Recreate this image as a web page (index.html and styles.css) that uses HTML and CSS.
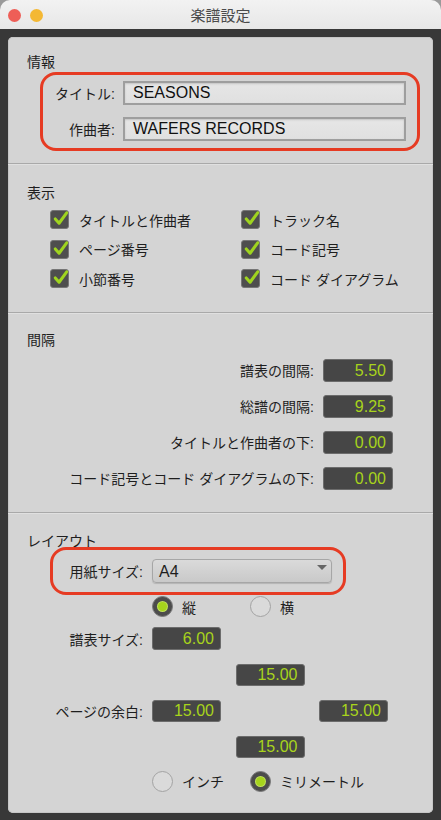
FILE: index.html
```html
<!DOCTYPE html>
<html lang="ja">
  <head>
    <meta charset="UTF-8" />
    <meta name="viewport" content="width=device-width, initial-scale=1.0" />
    <title>楽譜設定</title>
    <link rel="stylesheet" href="styles.css">
  </head>
  <body>
    <div class="window">
      <div class="titlebar">
        <div class="lights">
          <span class="light close"></span>
          <span class="light minimize"></span>
        </div>
        <div class="title">楽譜設定</div>
      </div>

      <div class="frame">
        <div class="panel">
          <!-- 情報 -->
          <section class="group info">
            <h2>情報</h2>
            <div class="callout info-box">
              <div class="field">
                <label>タイトル:</label>
                <div class="text-input">SEASONS</div>
              </div>
              <div class="field">
                <label>作曲者:</label>
                <div class="text-input">WAFERS RECORDS</div>
              </div>
            </div>
          </section>

          <!-- 表示 -->
          <section class="group display">
            <h2>表示</h2>
            <div class="checklist">
              <div class="check"><span class="checkbox"><svg viewBox="0 0 20 20"><path d="M4.5 10.5l4 4.5 8-11" /></svg></span>タイトルと作曲者</div>
              <div class="check"><span class="checkbox"><svg viewBox="0 0 20 20"><path d="M4.5 10.5l4 4.5 8-11" /></svg></span>トラック名</div>
              <div class="check"><span class="checkbox"><svg viewBox="0 0 20 20"><path d="M4.5 10.5l4 4.5 8-11" /></svg></span>ページ番号</div>
              <div class="check"><span class="checkbox"><svg viewBox="0 0 20 20"><path d="M4.5 10.5l4 4.5 8-11" /></svg></span>コード記号</div>
              <div class="check"><span class="checkbox"><svg viewBox="0 0 20 20"><path d="M4.5 10.5l4 4.5 8-11" /></svg></span>小節番号</div>
              <div class="check"><span class="checkbox"><svg viewBox="0 0 20 20"><path d="M4.5 10.5l4 4.5 8-11" /></svg></span>コード ダイアグラム</div>
            </div>
          </section>

          <!-- 間隔 -->
          <section class="group spacing">
            <h2>間隔</h2>
            <div class="spacing-row">
              <label>譜表の間隔:</label>
              <div class="num">5.50</div>
            </div>
            <div class="spacing-row">
              <label>総譜の間隔:</label>
              <div class="num">9.25</div>
            </div>
            <div class="spacing-row">
              <label>タイトルと作曲者の下:</label>
              <div class="num">0.00</div>
            </div>
            <div class="spacing-row">
              <label>コード記号とコード ダイアグラムの下:</label>
              <div class="num">0.00</div>
            </div>
          </section>

          <!-- レイアウト -->
          <section class="group layout">
            <h2>レイアウト</h2>
            <div class="callout paper-box">
              <label>用紙サイズ:</label>
              <div class="select">A4<span class="arrow"></span></div>
            </div>

            <div class="radios orientation">
              <div class="radio-item"><span class="radio on"></span>縦</div>
              <div class="radio-item"><span class="radio"></span>横</div>
            </div>

            <div class="layout-row staff">
              <label>譜表サイズ:</label>
              <div class="num">6.00</div>
            </div>

            <div class="layout-row margins">
              <label>ページの余白:</label>
              <div class="margin-grid">
                <div class="num top">15.00</div>
                <div class="num left">15.00</div>
                <div class="num right">15.00</div>
                <div class="num bottom">15.00</div>
              </div>
            </div>

            <div class="radios units">
              <div class="radio-item"><span class="radio"></span>インチ</div>
              <div class="radio-item"><span class="radio on"></span>ミリメートル</div>
            </div>
          </section>
        </div>
      </div>
    </div>
  </body>
</html>
```

FILE: styles.css
```css
body {
  margin: 0;
  background: #9a9a9a;
  font-family: "Liberation Sans", "Noto Sans CJK JP", sans-serif;
  font-size: 14px;
  color: #1e1e1e;
}

.window {
  min-height: 100vh;
  display: flex;
  flex-direction: column;
}

.titlebar {
  height: 29px;
  background: linear-gradient(#f2f2f2, #e7e7e7);
  border-radius: 10px 10px 0 0;
  display: grid;
  grid-template-columns: 1fr auto 1fr;
  align-items: center;
  padding: 0 8px;
}

.lights {
  display: flex;
  gap: 9px;
  padding-top: 1px;
}

.light {
  width: 13px;
  height: 13px;
  border-radius: 50%;
}

.close {
  background: #ee5e57;
}

.minimize {
  background: #f4b834;
}

.title {
  font-size: 15px;
  color: #4a4a4a;
}

.frame {
  flex: 1;
  display: flex;
  background: #383838;
  padding: 8px 8px 7px;
}

.panel {
  flex: 1;
  background: #d4d4d4;
  border-radius: 5px;
  box-shadow: inset 0 0 0 1px #c6c6c6;
}

.group + .group {
  border-top: 1px solid #a9a9a9;
  box-shadow: inset 0 1px 0 #e0e0e0;
}

h2 {
  margin: 0 0 0 19px;
  font-size: 14px;
  font-weight: normal;
  line-height: 20px;
}

label {
  white-space: nowrap;
}

.callout {
  border: 3px solid #e63b23;
  border-radius: 16px;
}

/* 情報 */
.info {
  padding: 15px 0 12px;
}

.info-box {
  margin-left: 32px;
  width: 363px;
  padding: 6px 11px 7px 0;
  display: flex;
  flex-direction: column;
  gap: 12px;
}

.field {
  display: flex;
  align-items: center;
  gap: 8px;
}

.field label {
  width: 72px;
  text-align: right;
}

.text-input {
  flex: 1;
  height: 24px;
  box-sizing: border-box;
  border: 2px solid #9e9e9e;
  background: linear-gradient(#e6e6e6, #e0e0e0);
  box-shadow: inset 0 1px 2px rgba(0, 0, 0, 0.15);
  font-size: 16px;
  line-height: 20px;
  padding-left: 8px;
  color: #111;
}

/* 表示 */
.display {
  padding: 19px 0 18px;
}

.checklist {
  margin: 2px 0 0 42px;
  display: grid;
  grid-template-columns: 191px 1fr;
  grid-auto-rows: 29.5px;
}

.check {
  display: flex;
  align-items: center;
  gap: 10px;
}

.checkbox {
  width: 19px;
  height: 19px;
  box-sizing: border-box;
  border: 1px solid #767676;
  border-radius: 3px;
  background: #4e4e4e;
  display: flex;
  position: relative;
}

.checkbox svg {
  position: absolute;
  left: 0;
  top: -2px;
  width: 19px;
  height: 19px;
  fill: none;
  stroke: #9fd41f;
  stroke-width: 3.2;
  stroke-linecap: round;
  stroke-linejoin: round;
}

/* 間隔 */
.spacing {
  padding: 17px 0 16px;
}

.spacing h2 {
  margin-bottom: 2.5px;
}

.spacing-row {
  height: 36px;
  display: flex;
  justify-content: flex-end;
  align-items: center;
  gap: 9px;
  padding-right: 40px;
}

.num {
  width: 70px;
  height: 23px;
  box-sizing: border-box;
  background: #464646;
  border: 1px solid #6c6c6c;
  border-radius: 3px;
  color: #a8d41c;
  font-size: 16px;
  line-height: 21px;
  text-align: right;
  padding-right: 6px;
}

/* レイアウト */
.layout {
  padding-top: 18px;
}

.paper-box {
  margin: -4px 0 0 42px;
  width: fit-content;
  padding: 9px 11px 9px 0;
  display: flex;
  align-items: center;
  gap: 9px;
}

.paper-box label {
  width: 90px;
  text-align: right;
}

.select {
  width: 180px;
  height: 24px;
  box-sizing: border-box;
  border: 1px solid #a6a6a6;
  border-radius: 4px;
  background: linear-gradient(#dadada, #c9c9c9);
  box-shadow: 0 1px 1px rgba(0, 0, 0, 0.15);
  font-size: 16px;
  line-height: 24px;
  padding-left: 6px;
  position: relative;
}

.arrow {
  position: absolute;
  right: 4px;
  top: 5px;
  border-left: 5px solid transparent;
  border-right: 5px solid transparent;
  border-top: 5px solid #666;
}

.radios {
  display: grid;
  grid-template-columns: 98px auto;
  padding-left: 144px;
  height: 21px;
}

.orientation {
  margin-top: 1px;
}

.units {
  margin-top: 12.5px;
}

.radio-item {
  display: flex;
  align-items: center;
  gap: 9px;
}

.radio {
  width: 21px;
  height: 21px;
  box-sizing: border-box;
  border-radius: 50%;
  border: 1.5px solid #a3a3a3;
  background: #dadada;
  display: flex;
  align-items: center;
  justify-content: center;
}

.radio.on {
  border: 1.5px solid #7a7a7a;
  background: #4c4c4c;
}

.radio.on::after {
  content: "";
  width: 9px;
  height: 9px;
  border-radius: 50%;
  background: #a6d41c;
  box-shadow: 0 0 0 1px #c0e15a;
}

.layout-row {
  display: flex;
  align-items: center;
  gap: 9px;
}

.layout-row label {
  width: 135px;
  text-align: right;
}

.layout-row .num {
  width: 69px;
}

.staff {
  margin-top: 10px;
}

.margins {
  margin-top: 14px;
}

.margin-grid {
  display: grid;
  grid-template-columns: 69px 69px 69px;
  grid-template-rows: 22px 22px 22px;
  column-gap: 14.5px;
  row-gap: 14px;
}

.margin-grid .num {
  height: 22px;
  line-height: 20px;
}

.margin-grid .top {
  grid-area: 1 / 2;
}

.margin-grid .left {
  grid-area: 2 / 1;
}

.margin-grid .right {
  grid-area: 2 / 3;
}

.margin-grid .bottom {
  grid-area: 3 / 2;
}
```
